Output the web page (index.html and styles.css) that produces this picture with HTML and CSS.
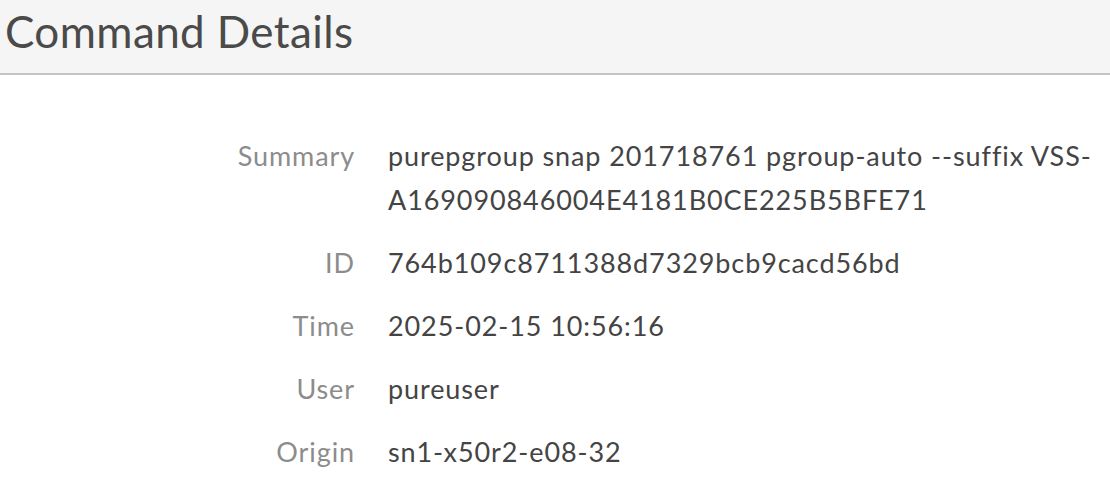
FILE: index.html
```html
<!DOCTYPE html>
<html>
<head>
<meta charset="utf-8">
<link rel="stylesheet" href="styles.css">
</head>
<body>
<div class="header"><h1 class="title">Command Details</h1></div>
<div class="details">
  <div class="label">Summary</div><div class="value">purepgroup snap 201718761 pgroup-auto --suffix VSS-A169090846004E4181B0CE225B5BFE71</div>
  <div class="label">ID</div><div class="value">764b109c8711388d7329bcb9cacd56bd</div>
  <div class="label">Time</div><div class="value">2025-02-15 10:56:16</div>
  <div class="label">User</div><div class="value">pureuser</div>
  <div class="label">Origin</div><div class="value">sn1-x50r2-e08-32</div>
</div>
</body>
</html>
```
FILE: styles.css
```css
html, body { margin: 0; padding: 0; background: #fff; }
body { font-family: "Lato", "Open Sans", sans-serif; color: #444; }
.header {
  background: #f5f5f5;
  border-bottom: 2px solid #c4c4c4;
  height: 75px;
  box-sizing: border-box;
  padding: 3px 0 0 5px;
}
.title { margin: 0; font-weight: 400; font-size: 44px; letter-spacing: 0.4px; line-height: 56px; color: #4a4a4a; }
.details {
  display: grid;
  grid-template-columns: 355px 1fr;
  column-gap: 33px;
  padding: 59px 10px 0 0;
  font-size: 27px;
  letter-spacing: 0.9px;
  line-height: 44px;
}
.label { text-align: right; color: #8c8c8c; padding-bottom: 19px; }
.value { color: #444; padding-bottom: 19px; overflow-wrap: anywhere; }
```
